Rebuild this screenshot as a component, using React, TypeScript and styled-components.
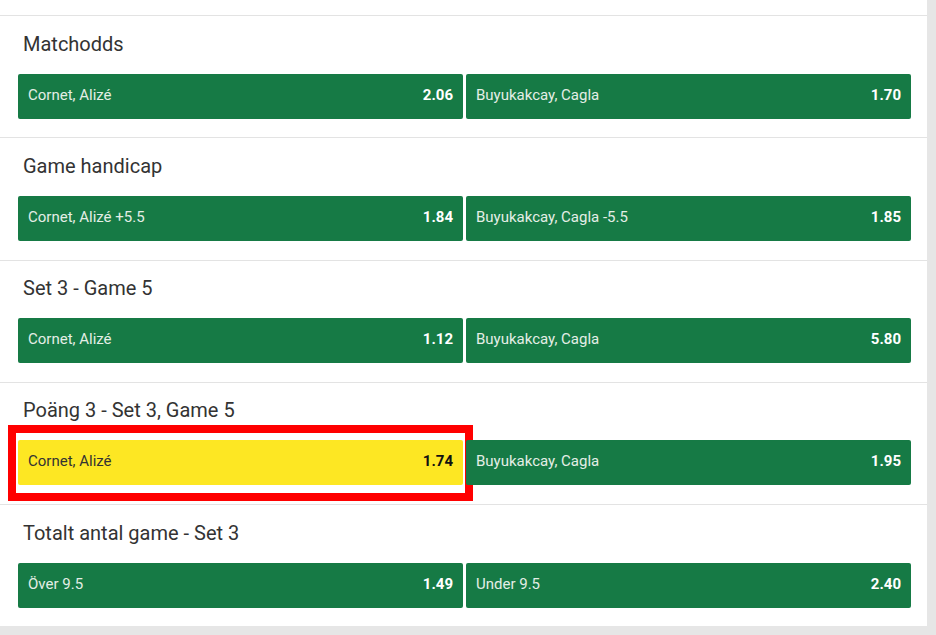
import React from 'react';
import styled, { createGlobalStyle } from 'styled-components';

const GlobalStyle = createGlobalStyle`
  html, body {
    margin: 0;
    padding: 0;
    background: #e6e6e6;
    font-family: Roboto, "Liberation Sans", Arial, sans-serif;
  }
`;

const Page = styled.div`
  width: 927px;
  height: 626px;
  background: #fff;
  padding-top: 15px;
  box-sizing: border-box;
  overflow: hidden;
`;

const Market = styled.section`
  border-top: 1px solid #e3e3e3;
  padding: 14px 16px 19px 18px;

  &:first-child {
    padding-bottom: 18px;
  }
  &:nth-child(3),
  &:nth-child(4) {
    padding-top: 13px;
  }
`;

const Title = styled.h2`
  margin: 0 0 16px 5px;
  font-size: 20px;
  line-height: 28px;
  font-weight: 400;
  color: #333;
`;

const Row = styled.div`
  display: grid;
  grid-template-columns: 1fr 1fr;
  gap: 3px;
`;

const Cell = styled.div`
  position: relative;
`;

const Outcome = styled.button<{ $selected?: boolean }>`
  display: flex;
  align-items: center;
  justify-content: space-between;
  width: 100%;
  height: 45px;
  padding: 0 10px 3px;
  border: none;
  border-radius: 2px;
  line-height: 20px;
  background: ${(p) => (p.$selected ? '#fde723' : '#167a45')};
  font-family: Roboto, "Liberation Sans", Arial, sans-serif;
  cursor: pointer;
`;

const Name = styled.span<{ $selected?: boolean }>`
  font-size: 15px;
  color: ${(p) => (p.$selected ? '#333' : '#e4eee6')};
`;

const Odds = styled.span<{ $selected?: boolean }>`
  font-size: 15px;
  font-weight: 700;
  color: ${(p) => (p.$selected ? '#111' : '#fff')};
`;

const Highlight = styled.div`
  position: absolute;
  left: -10px;
  right: -10px;
  top: -15px;
  bottom: -16px;
  border: 8px solid #ff0000;
  pointer-events: none;
`;

type Pick = { name: string; odds: string; selected?: boolean };

const markets: { title: string; picks: Pick[] }[] = [
  {
    title: 'Matchodds',
    picks: [
      { name: 'Cornet, Alizé', odds: '2.06' },
      { name: 'Buyukakcay, Cagla', odds: '1.70' },
    ],
  },
  {
    title: 'Game handicap',
    picks: [
      { name: 'Cornet, Alizé +5.5', odds: '1.84' },
      { name: 'Buyukakcay, Cagla -5.5', odds: '1.85' },
    ],
  },
  {
    title: 'Set 3 - Game 5',
    picks: [
      { name: 'Cornet, Alizé', odds: '1.12' },
      { name: 'Buyukakcay, Cagla', odds: '5.80' },
    ],
  },
  {
    title: 'Poäng 3 - Set 3, Game 5',
    picks: [
      { name: 'Cornet, Alizé', odds: '1.74', selected: true },
      { name: 'Buyukakcay, Cagla', odds: '1.95' },
    ],
  },
  {
    title: 'Totalt antal game - Set 3',
    picks: [
      { name: 'Över 9.5', odds: '1.49' },
      { name: 'Under 9.5', odds: '2.40' },
    ],
  },
];

const App: React.FC = () => {
  return (
    <>
      <GlobalStyle />
      <Page>
        {markets.map((m) => (
          <Market key={m.title}>
            <Title>{m.title}</Title>
            <Row>
              {m.picks.map((p) => (
                <Cell key={p.name}>
                  <Outcome $selected={p.selected}>
                    <Name $selected={p.selected}>{p.name}</Name>
                    <Odds $selected={p.selected}>{p.odds}</Odds>
                  </Outcome>
                  {p.selected && <Highlight />}
                </Cell>
              ))}
            </Row>
          </Market>
        ))}
      </Page>
    </>
  );
};

export default App;
